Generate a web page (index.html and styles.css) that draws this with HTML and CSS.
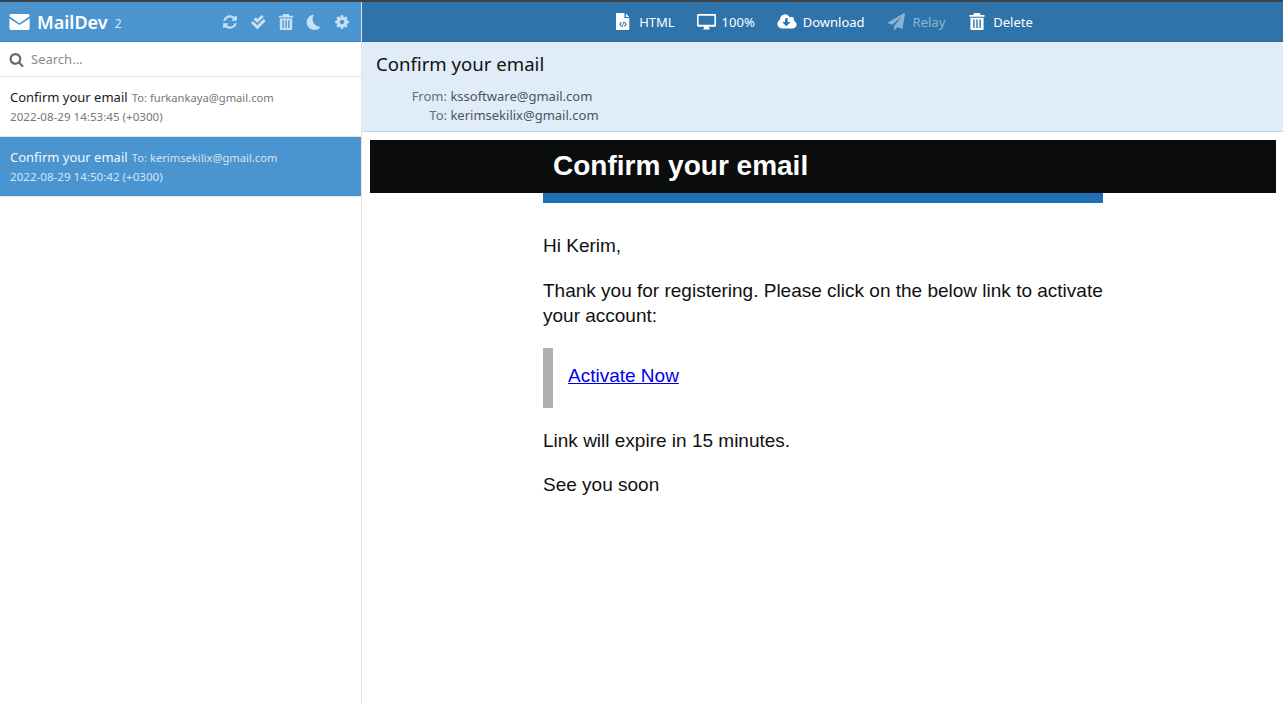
FILE: index.html
```html
<!DOCTYPE html>
<html lang="en">
<head>
    <meta charset="UTF-8">
    <title>MailDev</title>
    <link rel="stylesheet" href="styles.css">
</head>
<body>
    <div class="app">
        <aside class="sidebar">
            <header class="brand">
                <svg class="brand-icon" viewBox="0 0 24 19"><path d="M2 0h20a2 2 0 0 1 2 2v.8L12 11 0 2.8V2a2 2 0 0 1 2-2zM0 5.2l12 8 12-8V17a2 2 0 0 1-2 2H2a2 2 0 0 1-2-2z"/></svg>
                <span class="brand-name">MailDev</span>
                <span class="brand-count">2</span>
                <nav class="tools">
                    <svg class="tool" viewBox="0 0 1792 1792"><path d="M1639 1056q0 5-1 7-64 268-268 434.5t-478 166.5q-146 0-282.5-55t-243.5-157l-129 129q-19 19-45 19t-45-19-19-45v-448q0-26 19-45t45-19h448q26 0 45 19t19 45-19 45l-137 137q71 66 161 102t187 36q134 0 250-65t186-179q11-17 53-117 8-23 30-23h192q13 0 22.5 9.5t9.5 22.5zm25-800v448q0 26-19 45t-45 19h-448q-26 0-45-19t-19-45 19-45l138-138q-148-137-349-137-134 0-250 65t-186 179q-11 17-53 117-8 23-30 23h-199q-13 0-22.5-9.5t-9.5-22.5v-7q65-268 270-434.5t480-166.5q146 0 284 55.5t245 156.5l130-129q19-19 45-19t45 19 19 45z"/></svg>
                    <svg class="tool" viewBox="0 0 24 24"><path class="check" d="M7 6.500l4 4L19 3"/><path class="check" d="M3 12l8 8L22 9"/></svg>
                    <svg class="tool" viewBox="0 0 16 18"><path fill-rule="evenodd" d="M5 0h6l1 2h4v2H0V2h4zM1 5h14v12a1 1 0 0 1-1 1H2a1 1 0 0 1-1-1zM4 7v9h1.500V7zM7.250 7v9h1.500V7zM10.500 7v9H12V7z"/></svg>
                    <svg class="tool" viewBox="0 0 24 24"><path d="M22 19A11.500 11.500 0 0 1 12 1 11.500 11.500 0 1 0 22 19z"/></svg>
                    <svg class="tool" viewBox="0 0 1792 1792"><path d="M1152 896q0-106-75-181t-181-75-181 75-75 181 75 181 181 75 181-75 75-181zm512-109v222q0 12-8 23t-20 13l-185 28q-19 54-39 91 35 50 107 138 10 12 10 25t-9 23q-27 37-99 108t-94 71q-12 0-26-9l-138-108q-44 23-91 38-16 136-29 186-7 28-36 28h-222q-14 0-24.500-8.500t-11.500-21.500l-28-184q-49-16-90-37l-141 107q-10 9-25 9-14 0-25-11-126-114-165-168-7-10-7-23 0-12 8-23 15-21 51-66.500t54-70.500q-27-50-41-99l-183-27q-13-2-21-12.500t-8-23.500v-222q0-12 8-23t19-13l186-28q14-46 39-92-40-57-107-138-10-12-10-24 0-10 9-23 26-36 98.500-107.500t94.500-71.500q13 0 26 10l138 107q44-23 91-38 16-136 29-186 7-28 36-28h222q14 0 24.500 8.500t11.500 21.500l28 184q49 16 90 37l142-107q9-9 24-9 13 0 25 10 129 119 165 170 7 8 7 22 0 12-8 23-15 21-51 66.500t-54 70.500q26 50 41 98l183 28q13 2 21 12.500t8 23.500z"/></svg>
                </nav>
            </header>
            <div class="search">
                <svg class="search-icon" viewBox="0 0 1792 1792"><path d="M1216 832q0-185-131.500-316.500t-316.500-131.500-316.500 131.500-131.500 316.500 131.500 316.500 316.500 131.500 316.500-131.500 131.500-316.500zm512 832q0 52-38 90t-90 38q-54 0-90-38l-343-342q-179 124-399 124-143 0-273.500-55.500t-225-150-150-225-55.500-273.500 55.500-273.500 150-225 225-150 273.500-55.500 273.500 55.500 225 150 150 225 55.500 273.500q0 220-124 399l343 343q37 37 37 90z"/></svg>
                <span class="search-text">Search...</span>
            </div>
            <ul class="mails">
                <li class="mail">
                    <div><span class="mail-subject">Confirm your email</span> <span class="mail-to">To: furkankaya@gmail.com</span></div>
                    <div class="mail-date">2022-08-29 14:53:45 (+0300)</div>
                </li>
                <li class="mail active">
                    <div><span class="mail-subject">Confirm your email</span> <span class="mail-to">To: kerimsekilix@gmail.com</span></div>
                    <div class="mail-date">2022-08-29 14:50:42 (+0300)</div>
                </li>
            </ul>
        </aside>
        <main class="pane">
            <nav class="toolbar">
                <span class="action">
                    <svg class="action-icon file" viewBox="0 0 20 24"><path fill-rule="evenodd" d="M1 0h11v7h7v16a1 1 0 0 1-1 1H1a1 1 0 0 1-1-1V1a1 1 0 0 1 1-1zM14 .5L19 5.500h-5zM7.500 12.500L4.500 16l3 3.500 1-1L6.500 16l2-2.500zM12.500 12.500l-1 1 2 2.500-2 2.500 1 1 3-3.500zM10.800 12l-2.600 8h1.200l2.600-8z"/></svg>
                    HTML
                </span>
                <span class="action">
                    <svg class="action-icon screen" viewBox="0 0 24 20"><path fill-rule="evenodd" d="M1.500 0h21A1.500 1.500 0 0 1 24 1.500v13a1.500 1.500 0 0 1-1.500 1.500H15c0 1.500.5 2 1 2.500v.5a.5.500 0 0 1-.5.500h-7a.5.500 0 0 1-.5-.5v-.5c.5-.5 1-1 1-2.500H1.500A1.500 1.500 0 0 1 0 14.500v-13A1.500 1.500 0 0 1 1.500 0zM2 2v11.500h20V2z"/></svg>
                    100%
                </span>
                <span class="action">
                    <svg class="action-icon cloud" viewBox="0 0 1920 1792"><path d="M1280 928q0-14-9-23t-23-9h-224v-352q0-13-9.500-22.500t-22.500-9.500h-192q-13 0-22.500 9.500t-9.500 22.500v352h-224q-13 0-22.500 9.500t-9.500 22.500q0 14 9 23l352 352q9 9 23 9t23-9l351-351q10-12 10-24zm640 224q0 159-112.500 271.500t-271.500 112.500h-1088q-185 0-316.500-131.500t-131.500-316.500q0-130 70-240t188-165q-2-30-2-43 0-212 150-362t362-150q156 0 285.500 87t188.500 231q71-62 166-62 106 0 181 75t75 181q0 76-41 138 130 31 213.500 135.500t83.500 238.500z"/></svg>
                    Download
                </span>
                <span class="action disabled">
                    <svg class="action-icon plane" viewBox="0 0 1792 1792"><path d="M1764 11q33 24 27 64l-256 1536q-5 29-32 45-14 8-31 8-11 0-24-5l-453-185-242 295q-18 23-49 23-13 0-22-4-19-7-30.500-23.500t-11.500-36.500v-349l864-1059-1069 925-395-162q-37-14-40-55-2-40 32-59l1664-960q15-9 32-9 20 0 36 11z"/></svg>
                    Relay
                </span>
                <span class="action">
                    <svg class="action-icon bin" viewBox="0 0 16 18"><path fill-rule="evenodd" d="M5 0h6l1 2h4v2H0V2h4zM1 5h14v12a1 1 0 0 1-1 1H2a1 1 0 0 1-1-1zM4 7v9h1.500V7zM7.250 7v9h1.500V7zM10.500 7v9H12V7z"/></svg>
                    Delete
                </span>
            </nav>
            <section class="meta">
                <h2 class="meta-subject">Confirm your email</h2>
                <div class="meta-row"><span class="meta-label">From:</span> kssoftware@gmail.com</div>
                <div class="meta-row"><span class="meta-label">To:</span> kerimsekilix@gmail.com</div>
            </section>
            <article class="message">
                <div class="message-head">
                    <h1 class="message-title">Confirm your email</h1>
                </div>
                <div class="message-body">
                    <p>Hi Kerim,</p>
                    <p>Thank you for registering. Please click on the below link to activate your account:</p>
                    <blockquote class="message-link"><a href="#">Activate Now</a></blockquote>
                    <p class="message-expire">Link will expire in 15 minutes.</p>
                    <p>See you soon</p>
                </div>
            </article>
        </main>
    </div>
</body>
</html>
```

FILE: styles.css
```css
* {
    box-sizing: border-box;
}
html, body {
    height: 100%;
}
body {
    margin: 0;
    background-color: white;
    font-family: "Noto Sans", "Open Sans", sans-serif;
    overflow: hidden;
}
.app {
    display: flex;
    height: 100%;
    border-top: 2px solid #3d4247;
}

/* left column */
.sidebar {
    width: 362px;
    flex: none;
    border-right: 1px solid #e3e6e8;
}
.brand {
    display: flex;
    align-items: center;
    height: 40px;
    padding: 0 11px 0 9px;
    background-color: #4a94d0;
    border-bottom: 1px solid #3f85bf;
    color: white;
}
.brand-icon {
    width: 21px;
    height: 16px;
    fill: white;
}
.brand-name {
    margin-left: 7px;
    font-size: 18px;
    font-weight: 600;
}
.brand-count {
    margin: 4px 0 0 7px;
    font-size: 12px;
    color: #d3e5f3;
}
.tools {
    display: flex;
    gap: 12px;
    margin-left: auto;
}
.tool {
    width: 16px;
    height: 16px;
    fill: #c8e0f3;
}
.check {
    fill: none;
    stroke: #c8e0f3;
    stroke-width: 4.5;
}
.search {
    display: flex;
    align-items: center;
    height: 35px;
    padding-left: 9px;
    border-bottom: 1px solid #e3e6e8;
}
.search-icon {
    width: 15px;
    height: 15px;
    fill: #6e6660;
}
.search-text {
    margin-left: 7px;
    font-size: 13px;
    color: #8a8a8a;
}
.mails {
    list-style: none;
    margin: 0;
    padding: 0;
}
.mail {
    height: 60px;
    padding: 10px 10px 0;
    line-height: 19px;
    border-bottom: 1px solid #e3e6e8;
}
.mail.active {
    background-color: #4a94d0;
    color: white;
}
.mail-subject {
    font-size: 13px;
    color: #1a1a1a;
}
.mail-to {
    font-size: 11.2px;
    color: #777;
}
.mail-date {
    font-size: 11.6px;
    color: #777;
}
.mail.active .mail-subject {
    color: #f1f7fc;
}
.mail.active .mail-to,
.mail.active .mail-date {
    color: #d3e5f3;
}

/* right column */
.pane {
    flex: 1;
    min-width: 0;
}
.toolbar {
    display: flex;
    justify-content: center;
    align-items: center;
    gap: 22px;
    height: 40px;
    background-color: #2e74ab;
    border-bottom: 1px solid #2a6a9e;
    padding-left: 4px;
}
.action {
    display: flex;
    align-items: center;
    font-size: 13px;
    color: white;
}
.action.disabled {
    margin: 0 2px 0 1px;
    opacity: 0.45;
}
.action-icon {
    fill: white;
    margin-right: 8px;
}
.file { width: 14px; height: 17px; margin-right: 9px; }
.screen { width: 19px; height: 16px; margin-right: 6px; }
.cloud { width: 20px; height: 18px; margin-right: 6px; }
.plane { width: 17px; height: 17px; }
.bin { width: 16px; height: 17px; }
.meta {
    height: 90px;
    padding: 10px 14px 0;
    background-color: #e0ecf7;
    border-bottom: 1px solid #c3d7e8;
}
.meta-subject {
    margin: 0 0 11px;
    font-size: 18.6px;
    font-weight: 400;
    line-height: 24px;
    color: #111;
}
.meta-row {
    font-size: 13px;
    line-height: 19px;
    color: #4a5560;
    padding-left: 21px;
}
.meta-label {
    display: inline-block;
    width: 50px;
    text-align: right;
    color: #5f7180;
}

/* the message itself */
.message {
    padding: 8px 7px 0 8px;
    font-family: "Liberation Sans", Arial, sans-serif;
    font-size: 19px;
    line-height: 25px;
    color: #111;
}
.message-head {
    width: 100%;
    height: 53px;
    background-color: #0b0d0d;
}
.message-title {
    width: 560px;
    margin: 0 auto;
    padding: 9px 10px;
    font-size: 28px;
    line-height: 33px;
    font-weight: 700;
    color: white;
}
.message-body {
    width: 560px;
    margin: 0 auto;
    padding-top: 30px;
    border-top: 10px solid #1f6fb5;
}
.message-body p {
    margin: 0 0 20px;
}
.message-body .message-expire {
    margin-bottom: 19px;
}
.message-link {
    height: 60px;
    margin: 0 0 20px;
    padding: 15px 0 0 15px;
    border-left: 10px solid #aeb0b3;
}
.message-link a {
    color: #0000ee;
}
```
